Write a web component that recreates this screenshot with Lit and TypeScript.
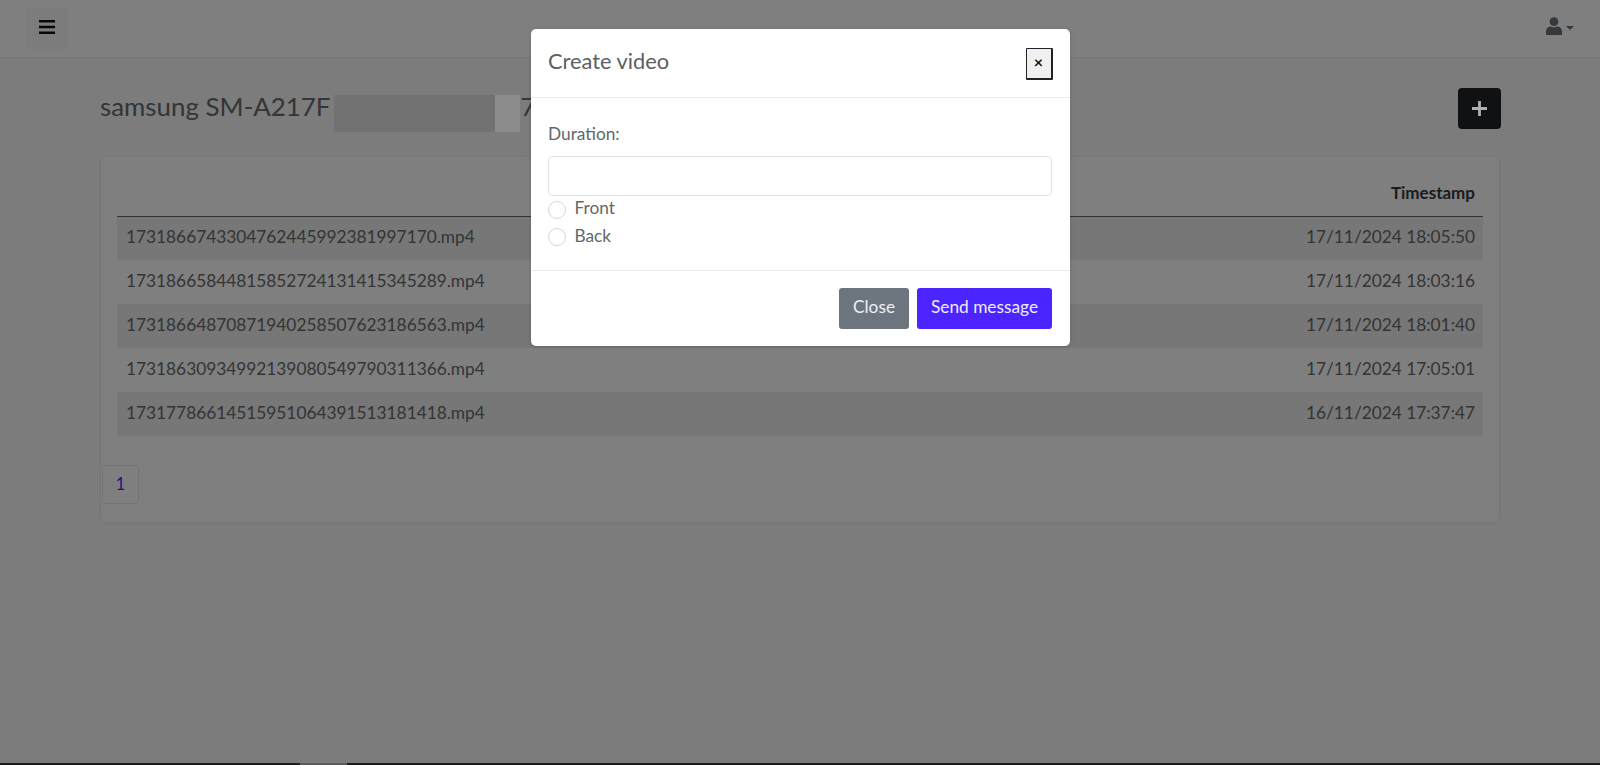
import { LitElement, html, css } from "lit";
import { customElement } from "lit/decorators.js";

const ROWS = [
  ["1731866743304762445992381997170.mp4", "17/11/2024 18:05:50"],
  ["1731866584481585272413141534" + "5289.mp4", "17/11/2024 18:03:16"],
  ["1731866487087194025850762318" + "6563.mp4", "17/11/2024 18:01:40"],
  ["1731863093499213908054979031" + "1366.mp4", "17/11/2024 17:05:01"],
  ["1731778661451595106439151318" + "1418.mp4", "16/11/2024 17:37:47"],
];

@customElement("app-root")
export class AppRoot extends LitElement {
  static styles = css`
    :host {
      display: flex;
      flex-direction: column;
      height: 765px;
      overflow: hidden;
      font-family: "Lato", "Liberation Sans", sans-serif;
      font-size: 17.3px;
      color: #676a6c;
      background: #f8f8fa;
    }
    .page { flex: 1; position: relative; min-height: 0; }
    .nav {
      height: 58px;
      box-sizing: border-box;
      background: #ffffff;
      border-bottom: 1px solid #efefef;
      display: flex;
      align-items: flex-start;
      justify-content: space-between;
      padding: 8px 26px 0 26px;
    }
    .menu {
      width: 42px;
      height: 41px;
      padding-bottom: 4px;
      box-sizing: border-box;
      background: #f9f9f9;
      border-radius: 3px;
      display: flex;
      align-items: center;
      justify-content: center;
    }
    .user { display: flex; align-items: flex-start; gap: 4px; padding-top: 9px; }
    .caret { margin-top: 9px; }
    main { padding: 30px 100px 0 100px; }
    .head { display: flex; justify-content: space-between; align-items: center; }
    .title { display: flex; align-items: center; font-size: 25.9px; height: 41px; padding-bottom: 6px; box-sizing: border-box; }
    .redact { display: flex; height: 37px; margin-left: 4px; margin-top: 16px; }
    .r1 { width: 161px; background: #e4e4e6; }
    .r2 { width: 25px; background: #8c8c8c; position: relative; z-index: 2; }
    .add {
      width: 43px;
      height: 41px;
      border-radius: 4px;
      background: #1f2226;
      display: flex;
      align-items: center;
      justify-content: center;
      margin-right: -1px;
    }
    .add svg { position: relative; z-index: 2; }
    .card {
      margin-top: 27px;
      height: 367px;
      box-sizing: border-box;
      background: #fff;
      border: 1px solid #f0f0f0;
      border-radius: 4px;
      padding: 16px;
      box-shadow: 0 1px 2px rgba(0, 0, 0, 0.04);
    }
    table { width: 100%; border-collapse: collapse; }
    th {
      height: 43px;
      box-sizing: border-box;
      text-align: right;
      font-weight: 700;
      font-size: 17px;
      color: #343a40;
      padding: 0 8px 3px;
      border-bottom: 1px solid #6a6a6a;
    }
    td { height: 44px; box-sizing: border-box; padding: 0 8px 3px 9px; }
    td:last-child { text-align: right; }
    tbody tr:nth-child(odd) td { background: #eeeeee; }
    .pager {
      margin: 29px 0 0 -15px;
      width: 37px;
      height: 39px;
      padding-bottom: 3px;
      box-sizing: border-box;
      border: 1px solid #e9e9e9;
      border-radius: 4px;
      background: #fff;
      color: #4b24ff;
      font-size: 16.3px;
      display: flex;
      align-items: center;
      justify-content: center;
    }
    .backdrop {
      position: absolute;
      inset: 0;
      z-index: 1;
      background: rgba(0, 0, 0, 0.5);
    }
    .overlay {
      position: absolute;
      inset: 0;
      z-index: 3;
      display: flex;
      justify-content: center;
      align-items: flex-start;
      padding-top: 29px;
    }
    .modal {
      width: 539px;
      background: #fff;
      border-radius: 5px;
      box-shadow: 0 1px 4px rgba(0, 0, 0, 0.15);
    }
    .m-head {
      height: 69px;
      box-sizing: border-box;
      border-bottom: 1px solid #e9ecef;
      display: flex;
      align-items: center;
      justify-content: space-between;
      padding: 0 17px 0 17.5px;
    }
    .m-title { font-size: 21.8px; color: #5c5f62; padding-bottom: 6px; }
    .x {
      width: 27px;
      height: 32px;
      margin-top: 1px;
      box-sizing: border-box;
      padding: 0 0 3px;
      background: #f0f0f0;
      border: 1px solid #222;
      border-right-width: 2px;
      border-bottom-width: 2px;
      border-radius: 1px;
      color: #111;
      font-family: "Lato", sans-serif;
      font-size: 16px;
      font-weight: 700;
      line-height: 1;
    }
    .m-body { padding: 24px 17.5px 19px 17.5px; height: 172px; box-sizing: border-box; }
    .label { line-height: 24px; margin-bottom: 10px; color: #63676a; }
    input.text {
      display: block;
      width: 100%;
      height: 40px;
      box-sizing: border-box;
      border: 1px solid #dee2e6;
      border-radius: 4px;
      background: #fff;
    }
    .radio { display: flex; align-items: center; gap: 8.5px; height: 27.5px; color: #63676a; }
    .radio span { position: relative; top: -2px; }
    .radio input {
      appearance: none;
      margin: 0;
      width: 18px;
      height: 18px;
      border: 1px solid #d3d6d9;
      border-radius: 50%;
      background: #fff;
    }
    .m-foot {
      border-top: 1px solid #e9ecef;
      padding: 17px 17.5px;
      display: flex;
      justify-content: flex-end;
      gap: 8px;
    }
    .btn {
      height: 41px;
      box-sizing: border-box;
      border: none;
      border-radius: 3px;
      color: #eeeef6;
      font-family: inherit;
      font-size: 17.3px;
      padding: 0 0 4px;
    }
    .close { width: 70px; background: #6c757d; }
    .send { width: 135px; background: #4b24ff; }
    .strip { height: 2px; background: #1c1c1c; display: flex; }
    .strip i { display: block; width: 47px; height: 2px; margin-left: 300px; background: #5a5a5a; }
  `;

  render() {
    return html`
      <div class="page">
        <div class="nav">
          <div class="menu">
            <svg width="16" height="14" viewBox="0 0 16 14"><path fill="#111" d="M0 0h16v2.600H0zM0 5.700h16v2.600H0zM0 11.400h16V14H0z"/></svg>
          </div>
          <div class="user">
            <svg width="16" height="18" viewBox="0 0 16 18"><circle cx="8" cy="4.600" r="4.400" fill="#6b7279"/><path fill="#6b7279" d="M0 18v-3.400C0 11.500 2.500 9.600 5 9.600c1 .5 2 .8 3 .8s2-.3 3-.8c2.500 0 5 1.900 5 5V18z"/></svg>
            <svg class="caret" width="8" height="4" viewBox="0 0 8 4"><path fill="#6b7279" d="M0 0h8L4 4z"/></svg>
          </div>
        </div>
        <main>
          <div class="head">
            <div class="title">
              samsung SM-A217F
              <div class="redact"><div class="r1"></div><div class="r2"></div></div>7
            </div>
            <div class="add">
              <svg width="15" height="15" viewBox="0 0 16 16"><path fill="#b0b0b0" d="M6.500 0h3v6.500H16v3H9.500V16h-3V9.500H0v-3h6.500z"/></svg>
            </div>
          </div>
          <div class="card">
            <table>
              <thead><tr><th></th><th>Timestamp</th></tr></thead>
              <tbody>
                ${ROWS.map((r) => html`<tr><td>${r[0]}</td><td>${r[1]}</td></tr>`)}
              </tbody>
            </table>
            <div class="pager">1</div>
          </div>
        </main>
        <div class="backdrop"></div>
        <div class="overlay">
          <div class="modal">
            <div class="m-head">
              <div class="m-title">Create video</div>
              <button class="x">×</button>
            </div>
            <div class="m-body">
              <div class="label">Duration:</div>
              <input class="text" type="text" />
              <label class="radio"><input type="radio" name="cam" /><span>Front</span></label>
              <label class="radio"><input type="radio" name="cam" /><span>Back</span></label>
            </div>
            <div class="m-foot">
              <button class="btn close">Close</button>
              <button class="btn send">Send message</button>
            </div>
          </div>
        </div>
      </div>
      <div class="strip"><i></i></div>
    `;
  }
}
